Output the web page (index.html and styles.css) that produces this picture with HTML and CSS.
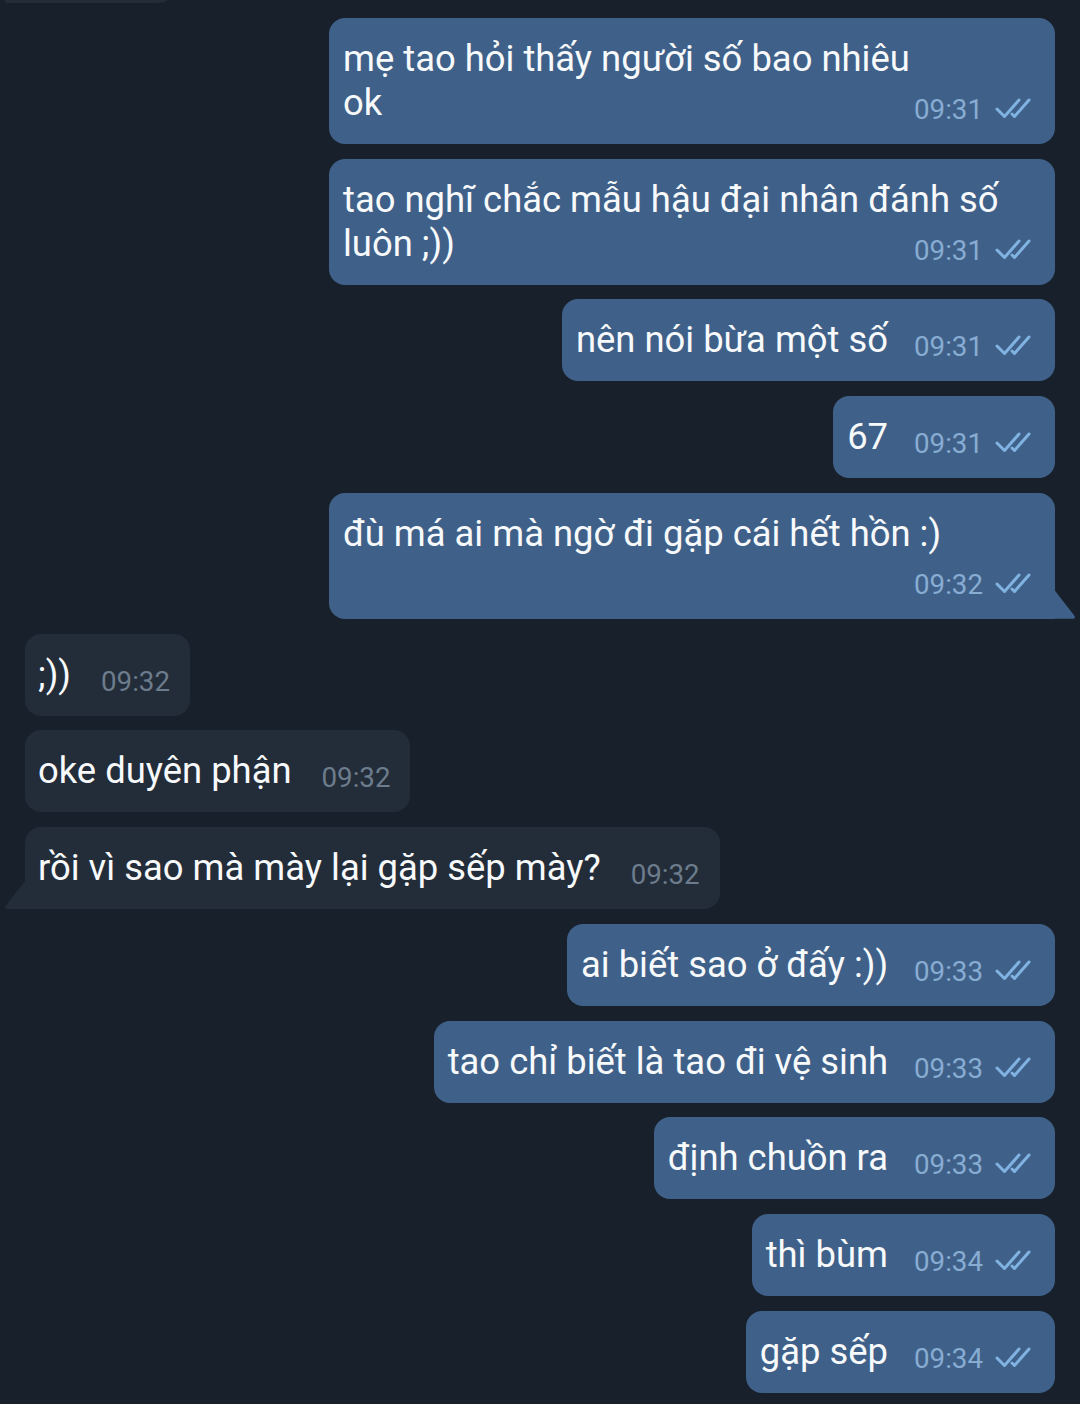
FILE: index.html
```html
<!DOCTYPE html>
<html lang="vi">
<head>
    <meta charset="UTF-8">
    <meta name="viewport" content="width=device-width, initial-scale=1.0">
    <title>Chat</title>
    <link rel="stylesheet" href="styles.css">
</head>
<body>
  <div class="chat">
    <!-- tin nhắn trước, bị cắt ở đầu màn hình -->
    <div class="row row-in">
      <div class="bubble bubble-in tail cut"></div>
    </div>

    <div class="row row-out">
      <div class="bubble bubble-out full">mẹ tao hỏi thấy người số bao nhiêu<br>ok<span class="meta">09:31<svg class="checks" viewBox="0 0 38 22"><path d="M2 12 L9.5 19.5 L24 3"/><path d="M17 17 L19.5 19.5 L34 3"/></svg></span></div>
    </div>
    <div class="row row-out">
      <div class="bubble bubble-out">tao nghĩ chắc mẫu hậu đại nhân đánh số luôn ;))<span class="meta">09:31<svg class="checks" viewBox="0 0 38 22"><path d="M2 12 L9.5 19.5 L24 3"/><path d="M17 17 L19.5 19.5 L34 3"/></svg></span></div>
    </div>
    <div class="row row-out">
      <div class="bubble bubble-out">nên nói bừa một số<span class="meta">09:31<svg class="checks" viewBox="0 0 38 22"><path d="M2 12 L9.5 19.5 L24 3"/><path d="M17 17 L19.5 19.5 L34 3"/></svg></span></div>
    </div>
    <div class="row row-out">
      <div class="bubble bubble-out">67<span class="meta">09:31<svg class="checks" viewBox="0 0 38 22"><path d="M2 12 L9.5 19.5 L24 3"/><path d="M17 17 L19.5 19.5 L34 3"/></svg></span></div>
    </div>
    <div class="row row-out">
      <div class="bubble bubble-out tail">đù má ai mà ngờ đi gặp cái hết hồn :)<span class="meta">09:32<svg class="checks" viewBox="0 0 38 22"><path d="M2 12 L9.5 19.5 L24 3"/><path d="M17 17 L19.5 19.5 L34 3"/></svg></span></div>
    </div>

    <div class="row row-in">
      <div class="bubble bubble-in">;))<span class="meta">09:32</span></div>
    </div>
    <div class="row row-in">
      <div class="bubble bubble-in">oke duyên phận<span class="meta">09:32</span></div>
    </div>
    <div class="row row-in">
      <div class="bubble bubble-in tail">rồi vì sao mà mày lại gặp sếp mày?<span class="meta">09:32</span></div>
    </div>

    <div class="row row-out">
      <div class="bubble bubble-out">ai biết sao ở đấy :))<span class="meta">09:33<svg class="checks" viewBox="0 0 38 22"><path d="M2 12 L9.5 19.5 L24 3"/><path d="M17 17 L19.5 19.5 L34 3"/></svg></span></div>
    </div>
    <div class="row row-out">
      <div class="bubble bubble-out">tao chỉ biết là tao đi vệ sinh<span class="meta">09:33<svg class="checks" viewBox="0 0 38 22"><path d="M2 12 L9.5 19.5 L24 3"/><path d="M17 17 L19.5 19.5 L34 3"/></svg></span></div>
    </div>
    <div class="row row-out">
      <div class="bubble bubble-out">định chuồn ra<span class="meta">09:33<svg class="checks" viewBox="0 0 38 22"><path d="M2 12 L9.5 19.5 L24 3"/><path d="M17 17 L19.5 19.5 L34 3"/></svg></span></div>
    </div>
    <div class="row row-out">
      <div class="bubble bubble-out">thì bùm<span class="meta">09:34<svg class="checks" viewBox="0 0 38 22"><path d="M2 12 L9.5 19.5 L24 3"/><path d="M17 17 L19.5 19.5 L34 3"/></svg></span></div>
    </div>
    <div class="row row-out">
      <div class="bubble bubble-out">gặp sếp<span class="meta">09:34<svg class="checks" viewBox="0 0 38 22"><path d="M2 12 L9.5 19.5 L24 3"/><path d="M17 17 L19.5 19.5 L34 3"/></svg></span></div>
    </div>
  </div>
</body>
</html>
```

FILE: styles.css
```css
* {
    margin: 0;
    padding: 0;
    box-sizing: border-box;
}

html, body {
    height: 100%;
}

body {
    font-family: Roboto, "Noto Sans", sans-serif;
    background-color: #18212b;
    color: #f7f9fb;
    overflow: hidden;
}

/* Chat list */
.chat {
    display: flex;
    flex-direction: column;
    gap: 14.75px;
    padding: 0 25px;
}

.row {
    display: flex;
}

.row-out {
    justify-content: flex-end;
}

.row-in {
    justify-content: flex-start;
}

/* Bubbles */
.bubble {
    position: relative;
    max-width: 726px;
    padding: 19px 22px 19px 14px;
    border-radius: 16px;
    font-size: 36.4px;
    line-height: 44px;
}

.bubble.full {
    width: 726px;
}

.bubble-out {
    background-color: #3f6189;
}

.bubble-in {
    background-color: #232d39;
    padding-left: 13px;
    padding-right: 20px;
}

.cut {
    width: 150px;
    height: 82px;
    margin-top: -79px;
}

/* tails */
.bubble-out.tail {
    border-bottom-right-radius: 0;
}

.bubble-out.tail::after {
    content: "";
    position: absolute;
    right: -20px;
    bottom: 0;
    width: 20px;
    height: 28px;
    background-color: #3f6189;
    clip-path: polygon(0 0, 100% 92%, 96% 100%, 0 100%);
}

.bubble-in.tail {
    border-bottom-left-radius: 0;
}

.bubble-in.tail::before {
    content: "";
    position: absolute;
    left: -20px;
    bottom: 0;
    width: 20px;
    height: 28px;
    background-color: #232d39;
    clip-path: polygon(100% 0, 100% 100%, 4% 100%, 0 92%);
}

/* time + ticks */
.meta {
    float: right;
    margin: 14px 0 0 26px;
    font-size: 27.7px;
    line-height: 30px;
    white-space: nowrap;
    color: #88acd2;
}

.bubble-in .meta {
    margin-left: 30px;
    color: #6c7c8c;
}

.checks {
    width: 38px;
    height: 22px;
    margin-left: 12px;
    vertical-align: baseline;
    fill: none;
    stroke: #80b2e2;
    stroke-width: 3;
    stroke-linecap: round;
    stroke-linejoin: round;
}
```
